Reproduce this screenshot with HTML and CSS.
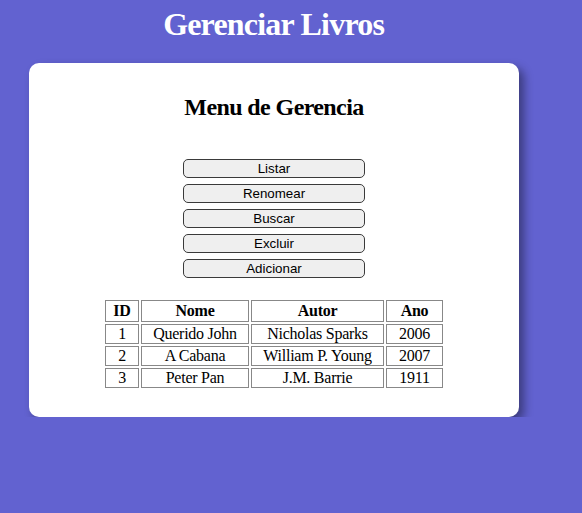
FILE: index.html
```html
<!DOCTYPE html>
<html lang="pt">
<head>
<meta charset="utf-8">
<title>Gerenciar Livros</title>
<link rel="stylesheet" href="styles.css">
</head>
<body>
<div class="page">
  <h1 class="title">Gerenciar Livros</h1>
  <div class="card">
    <h2 class="subtitle">Menu de Gerencia</h2>
    <div class="menu">
      <button class="btn">Listar</button>
      <button class="btn">Renomear</button>
      <button class="btn">Buscar</button>
      <button class="btn">Excluir</button>
      <button class="btn">Adicionar</button>
    </div>
    <table class="books">
      <thead>
        <tr><th class="c-id">ID</th><th class="c-nome">Nome</th><th class="c-autor">Autor</th><th class="c-ano">Ano</th></tr>
      </thead>
      <tbody>
        <tr><td>1</td><td>Querido John</td><td>Nicholas Sparks</td><td>2006</td></tr>
        <tr><td>2</td><td>A Cabana</td><td>William P. Young</td><td>2007</td></tr>
        <tr><td>3</td><td>Peter Pan</td><td>J.M. Barrie</td><td>1911</td></tr>
      </tbody>
    </table>
  </div>
</div>
</body>
</html>
```
FILE: styles.css
```css
html, body {
  margin: 0;
  padding: 0;
}
body {
  background: #6262d0;
  font-family: "Liberation Serif", "Times New Roman", serif;
  color: #000;
}
.page {
  width: 548px;
  text-align: center;
}
.title {
  margin: 6px 0 0;
  font-size: 32px;
  line-height: 37px;
  font-weight: bold;
  letter-spacing: -0.8px;
  text-indent: -0.8px;
  color: #fff;
}
.card {
  width: 490px;
  height: 354px;
  box-sizing: border-box;
  margin: 20px auto 0;
  background: #fff;
  border-radius: 10px;
  box-shadow: 5px 5px 10px rgba(0, 0, 0, 0.4);
  padding-top: 30px;
  display: flex;
  flex-direction: column;
  align-items: center;
}
.subtitle {
  margin: 0;
  font-size: 24px;
  line-height: 28px;
  font-weight: bold;
  letter-spacing: -0.6px;
}
.menu {
  margin-top: 38px;
  display: flex;
  flex-direction: column;
  gap: 6px;
  align-items: center;
}
.btn {
  width: 182px;
  height: 19px;
  box-sizing: border-box;
  padding: 0;
  border: 1px solid #3a3a3a;
  border-radius: 5px;
  background: #efefef;
  font-family: "Liberation Sans", Arial, sans-serif;
  font-size: 13.33px;
  line-height: 15px;
  color: #000;
}
.books {
  margin-top: 20px;
  border-collapse: separate;
  border-spacing: 2px;
  table-layout: fixed;
  font-size: 16px;
}
.books th, .books td {
  box-sizing: border-box;
  border: 1px solid #888;
  padding: 1px 2px;
  height: 20px;
  line-height: 16px;
  text-align: center;
  white-space: nowrap;
  letter-spacing: -0.25px;
}
.books th {
  height: 22px;
  font-weight: bold;
}
.c-id { width: 34px; }
.c-nome { width: 108px; }
.c-autor { width: 133px; }
.c-ano { width: 57px; }
```
